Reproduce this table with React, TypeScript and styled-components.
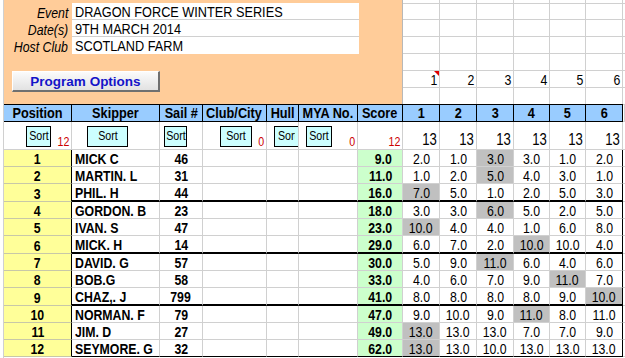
import styled, { createGlobalStyle, css } from 'styled-components';

const SANS = `"Liberation Sans", Arial, sans-serif`;
const GRID = '#d0d0d0';

type Row = {
    pos: number;
    skipper: string;
    sail: string;
    score: string;
    races: string[];
    drop: number;
};

const rows: Row[] = [
    { pos: 1, skipper: 'MICK C', sail: '46', score: '9.0', races: ['2.0', '1.0', '3.0', '3.0', '1.0', '2.0'], drop: 2 },
    { pos: 2, skipper: 'MARTIN. L', sail: '31', score: '11.0', races: ['1.0', '2.0', '5.0', '4.0', '3.0', '1.0'], drop: 2 },
    { pos: 3, skipper: 'PHIL. H', sail: '44', score: '16.0', races: ['7.0', '5.0', '1.0', '2.0', '5.0', '3.0'], drop: 0 },
    { pos: 4, skipper: 'GORDON. B', sail: '23', score: '18.0', races: ['3.0', '3.0', '6.0', '5.0', '2.0', '5.0'], drop: 2 },
    { pos: 5, skipper: 'IVAN. S', sail: '47', score: '23.0', races: ['10.0', '4.0', '4.0', '1.0', '6.0', '8.0'], drop: 0 },
    { pos: 6, skipper: 'MICK. H', sail: '14', score: '29.0', races: ['6.0', '7.0', '2.0', '10.0', '10.0', '4.0'], drop: 3 },
    { pos: 7, skipper: 'DAVID. G', sail: '57', score: '30.0', races: ['5.0', '9.0', '11.0', '6.0', '4.0', '6.0'], drop: 2 },
    { pos: 8, skipper: 'BOB.G', sail: '58', score: '33.0', races: ['4.0', '6.0', '7.0', '9.0', '11.0', '7.0'], drop: 4 },
    { pos: 9, skipper: 'CHAZ,. J', sail: '799', score: '41.0', races: ['8.0', '8.0', '8.0', '8.0', '9.0', '10.0'], drop: 5 },
    { pos: 10, skipper: 'NORMAN. F', sail: '79', score: '47.0', races: ['9.0', '10.0', '9.0', '11.0', '8.0', '11.0'], drop: 3 },
    { pos: 11, skipper: 'JIM. D', sail: '27', score: '49.0', races: ['13.0', '13.0', '13.0', '7.0', '7.0', '9.0'], drop: 0 },
    { pos: 12, skipper: 'SEYMORE. G', sail: '32', score: '62.0', races: ['13.0', '13.0', '10.0', '13.0', '13.0', '13.0'], drop: 0 },
];

const raceNos = [1, 2, 3, 4, 5, 6];
const headers = ['Position', 'Skipper', 'Sail #', 'Club/City', 'Hull', 'MYA No.', 'Score'];

const GlobalStyle = createGlobalStyle`
    html, body { margin: 0; padding: 0; background: #fff; }
    body { font-family: ${SANS}; color: #000; overflow: hidden; }
    * { box-sizing: border-box; }
`;

// the sheet is set in Arial Narrow; no narrow face here, so squeeze Arial
const Txt = styled.span<{ $o?: 'left' | 'right' | 'center' }>`
    display: inline-block;
    white-space: nowrap;
    transform: scaleX(0.82);
    transform-origin: ${(p) => p.$o || 'center'} bottom;
`;

const Sheet = styled.div`
    margin-left: 3px;
    border-left: 1px solid ${GRID};
    width: 622px;
    height: 358px;
    overflow: hidden;
`;

const Top = styled.div`
    display: grid;
    grid-template-columns: 399px 1fr;
    height: 104px;
`;

const Panel = styled.div`
    background: #ffcc99;
    border-right: 1px solid #b8b8b8;
    padding-top: 3px;
`;

const Fields = styled.div`
    display: grid;
    grid-template-columns: 68px 287px;
    grid-auto-rows: 17px;
`;

const Label = styled.div`
    display: flex;
    align-items: flex-end;
    justify-content: flex-end;
    padding-right: 4px;
    font-size: 15px;
    font-style: italic;
    line-height: 1;
    white-space: nowrap;
`;

const Field = styled.div<{ $last?: boolean }>`
    display: flex;
    align-items: flex-end;
    padding-left: 3px;
    background: #fff;
    border-bottom: 1px solid ${(p) => (p.$last ? '#fff' : GRID)};
    font-size: 15.5px;
    line-height: 1;
`;

const OptionsButton = styled.button`
    display: block;
    margin: 17px 0 0 8px;
    width: 148px;
    height: 21px;
    padding: 1px 0 0;
    font: bold 13.5px ${SANS};
    color: #1414c8;
    background: linear-gradient(#fbfbfb, #e2e2e2);
    border-style: solid;
    border-width: 1px 2px 2px 1px;
    border-color: #ffffff #707070 #707070 #ffffff;
`;

const RightGrid = styled.div`
    display: grid;
    grid-template-columns: 37px 37px 37px 36px 36px 37px 1fr;
    grid-template-rows: 4px 16px 17px 17px 17px 17px 16px;
`;

const GridCell = styled.div<{ $last?: boolean; $note?: boolean }>`
    position: relative;
    display: flex;
    align-items: flex-end;
    justify-content: flex-end;
    padding: 0 2px 0 0;
    border-right: 1px solid ${GRID};
    border-bottom: ${(p) => (p.$last ? 'none' : `1px solid ${GRID}`)};
    font-size: 15px;
    line-height: 1;

    ${(p) =>
        p.$note &&
        css`
            &::after {
                content: '';
                position: absolute;
                top: 0;
                right: 0;
                border-top: 5px solid #e00000;
                border-left: 5px solid transparent;
            }
        `}
`;

const rowHeights = ['18px', '28px', ...rows.map((r) => (r.pos % 3 === 0 && r.pos < 12 ? '18px' : '17px'))].join(' ');

const Table = styled.div`
    display: grid;
    grid-template-columns: 68px 88px 43px 64px 32px 59px 45px 37px 37px 37px 36px 36px 37px 1fr;
    grid-template-rows: ${rowHeights};
`;

const HeadCell = styled.div<{ $filler?: boolean }>`
    display: flex;
    align-items: flex-end;
    justify-content: center;
    padding-bottom: 1px;
    background: ${(p) => (p.$filler ? '#fff' : '#99ccff')};
    border-top: 1px solid ${(p) => (p.$filler ? GRID : '#000')};
    border-right: 1px solid ${(p) => (p.$filler ? GRID : '#000')};
    border-bottom: 1px solid ${(p) => (p.$filler ? GRID : '#000')};
    font-size: 15.5px;
    font-weight: bold;
    line-height: 1;
`;

const SortCell = styled.div`
    display: grid;
    overflow: hidden;
    border-right: 1px solid ${GRID};
    border-bottom: 1px solid ${GRID};

    & > * {
        grid-area: 1 / 1;
    }
`;

const SortButton = styled.div<{ $x: number; $w: number; $clip?: boolean }>`
    justify-self: start;
    align-self: start;
    display: flex;
    justify-content: ${(p) => (p.$clip ? 'flex-start' : 'center')};
    margin: 4px 0 0 ${(p) => p.$x}px;
    width: ${(p) => p.$w}px;
    height: 21px;
    padding: ${(p) => (p.$clip ? '1px 0 0 3px' : '1px 0 0')};
    background: #ccffff;
    border: 1px solid #000;
    font-size: 13px;
    line-height: 16px;
    overflow: ${(p) => (p.$clip ? 'hidden' : 'visible')};
`;

const Clipped = styled.span`
    display: inline-block;
    width: 17px;
    overflow: hidden;
    white-space: nowrap;
`;

const Count = styled.div<{ $red?: boolean }>`
    justify-self: end;
    align-self: end;
    padding: 0 2px 1px 0;
    color: ${(p) => (p.$red ? '#cc0000' : '#000')};
    font-size: ${(p) => (p.$red ? '13px' : '16px')};
    line-height: 1;
`;

const cellBase = css<{ $thick?: boolean; $end?: boolean }>`
    display: flex;
    align-items: flex-end;
    border-right: 1px solid ${GRID};
    border-bottom: ${(p) => (p.$thick ? '2px solid #000' : p.$end ? '1px solid #000' : `1px solid ${GRID}`)};
    font-size: 15px;
    line-height: 1;
    white-space: nowrap;
`;

const PosCell = styled.div`
    display: flex;
    align-items: flex-end;
    justify-content: center;
    background: #ffff99;
    border-right: 1px solid #000;
    border-bottom: 1px solid #c8c8a8;
    font-size: 15px;
    font-weight: bold;
    line-height: 1;
`;

const NameCell = styled.div<{ $thick?: boolean; $end?: boolean }>`
    ${cellBase};
    padding-left: 3px;
    font-weight: bold;
`;

const SailCell = styled.div<{ $thick?: boolean; $end?: boolean }>`
    ${cellBase};
    justify-content: center;
    font-weight: bold;
`;

const BlankCell = styled.div<{ $thick?: boolean; $end?: boolean }>`
    ${cellBase};
`;

const ScoreCell = styled.div<{ $thick?: boolean; $end?: boolean }>`
    ${cellBase};
    justify-content: flex-end;
    padding-right: 10px;
    background: #ccffcc;
    font-weight: bold;
`;

const RaceCell = styled.div<{ $thick?: boolean; $end?: boolean; $drop?: boolean; $edge?: boolean }>`
    ${cellBase};
    justify-content: center;
    background: ${(p) => (p.$drop ? '#c0c0c0' : '#fff')};
    border-right-color: ${(p) => (p.$edge ? '#000' : GRID)};
    font-size: 15px;
`;

const Filler = styled.div`
    border-bottom: 1px solid ${GRID};
`;

const sortButtons: { x: number; w: number; clip?: boolean; count?: string }[] = [
    { x: 22, w: 25, count: '12' },
    { x: 15, w: 41 },
    { x: 4, w: 23 },
    { x: 17, w: 32, count: '0' },
    { x: 7, w: 25, clip: true },
    { x: 7, w: 26, count: '0' },
];

function App() {
    return (
        <>
            <GlobalStyle />
            <Sheet>
                <Top>
                    <Panel>
                        <Fields>
                            <Label>
                                <Txt $o='right'>Event</Txt>
                            </Label>
                            <Field>
                                <Txt $o='left'>DRAGON FORCE WINTER SERIES</Txt>
                            </Field>
                            <Label>
                                <Txt $o='right'>Date(s)</Txt>
                            </Label>
                            <Field>
                                <Txt $o='left'>9TH MARCH 2014</Txt>
                            </Field>
                            <Label>
                                <Txt $o='right'>Host Club</Txt>
                            </Label>
                            <Field $last>
                                <Txt $o='left'>SCOTLAND FARM</Txt>
                            </Field>
                        </Fields>
                        <OptionsButton>Program Options</OptionsButton>
                    </Panel>
                    <RightGrid>
                        {Array.from({ length: 7 }).map((_, r) =>
                            Array.from({ length: 7 }).map((_, c) => (
                                <GridCell key={`${r}-${c}`} $last={r === 6} $note={r === 5 && c === 0}>
                                    {r === 5 && c < 6 ? <Txt $o='right'>{raceNos[c]}</Txt> : null}
                                </GridCell>
                            ))
                        )}
                    </RightGrid>
                </Top>

                <Table>
                    {headers.map((h) => (
                        <HeadCell key={h}>
                            <Txt>{h}</Txt>
                        </HeadCell>
                    ))}
                    {raceNos.map((n) => (
                        <HeadCell key={`r${n}`}>
                            <Txt>{n}</Txt>
                        </HeadCell>
                    ))}
                    <HeadCell $filler />

                    {sortButtons.map((b, i) => (
                        <SortCell key={`s${i}`}>
                            {b.count && (
                                <Count $red>
                                    <Txt $o='right'>{b.count}</Txt>
                                </Count>
                            )}
                            <SortButton $x={b.x} $w={b.w} $clip={b.clip}>
                                {b.clip ? (
                                    <Clipped>
                                        <Txt $o='left'>Sort</Txt>
                                    </Clipped>
                                ) : (
                                    <Txt>Sort</Txt>
                                )}
                            </SortButton>
                        </SortCell>
                    ))}
                    <SortCell>
                        <Count $red>
                            <Txt $o='right'>12</Txt>
                        </Count>
                    </SortCell>
                    {raceNos.map((n) => (
                        <SortCell key={`c${n}`}>
                            <Count>
                                <Txt $o='right'>13</Txt>
                            </Count>
                        </SortCell>
                    ))}
                    <Filler />

                    {rows.map((row) => {
                        const thick = row.pos % 3 === 0 && row.pos < 12;
                        const end = row.pos === 12;
                        return [
                            <PosCell key={`p${row.pos}`}>
                                <Txt>{row.pos}</Txt>
                            </PosCell>,
                            <NameCell key={`n${row.pos}`} $thick={thick} $end={end}>
                                <Txt $o='left'>{row.skipper}</Txt>
                            </NameCell>,
                            <SailCell key={`s${row.pos}`} $thick={thick} $end={end}>
                                <Txt>{row.sail}</Txt>
                            </SailCell>,
                            <BlankCell key={`b1${row.pos}`} $thick={thick} $end={end} />,
                            <BlankCell key={`b2${row.pos}`} $thick={thick} $end={end} />,
                            <BlankCell key={`b3${row.pos}`} $thick={thick} $end={end} />,
                            <ScoreCell key={`sc${row.pos}`} $thick={thick} $end={end}>
                                <Txt $o='right'>{row.score}</Txt>
                            </ScoreCell>,
                            ...row.races.map((v, i) => (
                                <RaceCell
                                    key={`r${row.pos}-${i}`}
                                    $thick={thick}
                                    $end={end}
                                    $drop={i === row.drop}
                                    $edge={i === 5}>
                                    <Txt>{v}</Txt>
                                </RaceCell>
                            )),
                            <Filler key={`f${row.pos}`} />,
                        ];
                    })}
                </Table>
            </Sheet>
        </>
    );
}

export default App;
